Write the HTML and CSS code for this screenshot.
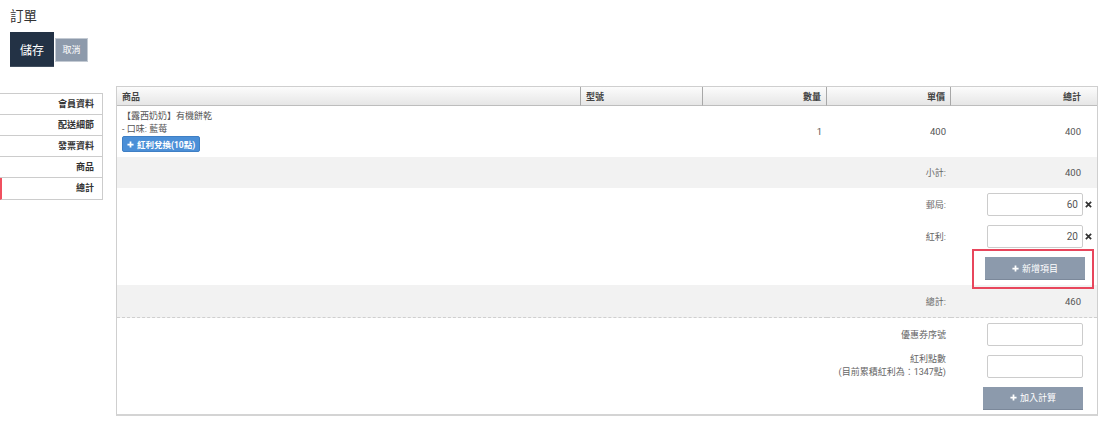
FILE: index.html
```html
<!DOCTYPE html>
<html lang="zh-Hant">
<head>
<meta charset="utf-8">
<title>訂單</title>
<link rel="stylesheet" href="styles.css">
</head>
<body>
<header class="page-head">
  <h1 class="title">訂單</h1>
  <div class="actions">
    <button class="btn btn-save">儲存</button>
    <button class="btn btn-cancel">取消</button>
  </div>
</header>
<div class="layout">
  <nav class="side-nav">
    <div class="side-item">會員資料</div>
    <div class="side-item">配送細節</div>
    <div class="side-item">發票資料</div>
    <div class="side-item">商品</div>
    <div class="side-item active">總計</div>
  </nav>
  <div class="panel">
    <table class="order-table">
      <thead>
        <tr>
          <th class="c-name">商品</th>
          <th class="c-model">型號</th>
          <th class="c-qty num">數量</th>
          <th class="c-price num">單價</th>
          <th class="c-total num last">總計</th>
        </tr>
      </thead>
      <tbody>
        <tr class="row-product">
          <td class="product">
            <div class="p-name">【露西奶奶】有機餅乾</div>
            <div class="p-opt">- 口味: 藍莓</div>
            <button class="btn btn-bonus"><svg class="plus" viewBox="0 0 8 8" width="7" height="7"><path d="M4 0.5V7.5M0.5 4H7.5" stroke="currentColor" stroke-width="2"/></svg><span>紅利兌換(10點)</span></button>
          </td>
          <td></td>
          <td class="num">1</td>
          <td class="num">400</td>
          <td class="num last">400</td>
        </tr>
        <tr class="row-sum">
          <td colspan="3"></td>
          <td class="label">小計:</td>
          <td class="num last">400</td>
        </tr>
        <tr class="row-fee first">
          <td colspan="3"></td>
          <td class="label">郵局:</td>
          <td class="field-cell">
            <div class="field">
              <input class="input" type="text" value="60">
              <span class="remove"><svg viewBox="0 0 8 8" width="7" height="7"><path d="M1 1L7 7M7 1L1 7" stroke="#333" stroke-width="2"/></svg></span>
            </div>
          </td>
        </tr>
        <tr class="row-fee">
          <td colspan="3"></td>
          <td class="label">紅利:</td>
          <td class="field-cell">
            <div class="field">
              <input class="input" type="text" value="20">
              <span class="remove"><svg viewBox="0 0 8 8" width="7" height="7"><path d="M1 1L7 7M7 1L1 7" stroke="#333" stroke-width="2"/></svg></span>
            </div>
          </td>
        </tr>
        <tr class="row-add">
          <td colspan="4"></td>
          <td class="field-cell">
            <div class="field">
              <span class="mark-wrap">
                <button class="btn btn-gray btn-add"><svg class="plus" viewBox="0 0 8 8" width="7" height="7"><path d="M4 0.5V7.5M0.5 4H7.5" stroke="currentColor" stroke-width="2"/></svg>新增項目</button>
                <span class="mark"></span>
              </span>
            </div>
          </td>
        </tr>
        <tr class="row-sum row-grand">
          <td colspan="3"></td>
          <td class="label">總計:</td>
          <td class="num last">460</td>
        </tr>
        <tr class="row-coupon">
          <td colspan="3"></td>
          <td class="label">優惠券序號</td>
          <td class="field-cell">
            <div class="field plain">
              <input class="input" type="text" value="">
            </div>
          </td>
        </tr>
        <tr class="row-coupon">
          <td colspan="3"></td>
          <td class="label two-line">紅利點數<br>(目前累積紅利為：1347點)</td>
          <td class="field-cell">
            <div class="field plain">
              <input class="input" type="text" value="">
            </div>
          </td>
        </tr>
        <tr class="row-calc">
          <td colspan="4"></td>
          <td class="field-cell">
            <div class="field plain">
              <button class="btn btn-gray btn-calc"><svg class="plus" viewBox="0 0 8 8" width="7" height="7"><path d="M4 0.5V7.5M0.5 4H7.5" stroke="currentColor" stroke-width="2"/></svg>加入計算</button>
            </div>
          </td>
        </tr>
      </tbody>
    </table>
  </div>
</div>
</body>
</html>
```

FILE: styles.css
```css
* { box-sizing: border-box; }
html, body { margin: 0; padding: 0; background: #fff; }
body {
  font-family: Roboto, "Noto Sans CJK TC", "Noto Sans", sans-serif;
  color: #555;
  font-size: 9px;
}
.page-head { padding: 5px 10px 0; }
.title {
  margin: 0;
  font-size: 13.5px;
  font-weight: normal;
  line-height: 22px;
  color: #333;
}
.actions { display: flex; align-items: center; margin-top: 5px; }
.btn { font-family: inherit; padding: 0; cursor: pointer; }
.btn-save {
  width: 44px; height: 35px;
  background: #233245; color: #fff;
  font-size: 12px;
  border: 0; border-bottom: 1px solid #56627299;
}
.btn-cancel {
  width: 33px; height: 24px; margin-left: 1px;
  background: #8d9aab; color: #fff;
  font-size: 9px;
  border: 1px solid #c3cad3;
}
.layout { display: flex; align-items: flex-start; margin-top: 19px; }
.side-nav {
  flex: none; width: 103px; margin-top: 7px;
  border-top: 1px solid #ccc; border-right: 1px solid #ccc;
}
.side-item {
  height: 21px; line-height: 20px;
  border-bottom: 1px solid #ccc;
  text-align: right; padding-right: 8px;
  font-weight: bold; color: #333; font-size: 9px;
}
.side-item.active { height: 22px; line-height: 21px; border-left: 2px solid #f0505f; }
.panel {
  flex: none; margin-left: 13px; width: 982px;
  border: 1px solid #cfcfcf; border-bottom: 2px solid #d4d4d4;
}
.order-table { width: 100%; border-collapse: separate; border-spacing: 0; table-layout: fixed; }
th {
  height: 19px; padding: 0 5px;
  font-weight: bold; font-size: 9px; color: #444; text-align: left;
  background: linear-gradient(#fcfcfc, #e6e6e6);
  border-bottom: 1px solid #bdbdbd; border-right: 1px solid #a8a8a8;
}
th:last-child { border-right: 0; }
th.c-name { width: 464px; }
th.c-model { width: 122px; }
th.c-qty { width: 124px; }
th.c-price { width: 124px; }
td { padding: 0 5px; vertical-align: middle; font-size: 9.5px; color: #555; }
.num { text-align: right; }
.last { padding-right: 16px; }
th.last { padding-right: 16px; }

.row-product td { height: 51px; }
td.product { padding: 4px 5px 5px; vertical-align: top; }
.p-name, .p-opt { font-size: 9px; line-height: 12.5px; color: #555; }
.btn-bonus {
  display: inline-flex; align-items: center; gap: 3px;
  height: 16px; margin-top: 1px;
  padding: 0 4px;
  white-space: nowrap;
  background: #4b8fd7; color: #fff;
  border: 1px solid #3f7fc4; border-radius: 2px;
  font-size: 8.5px; font-weight: bold;
}
.plus { flex: none; display: block; }

.row-sum td { height: 31px; background: #f2f2f2; }
.row-grand td { height: 33px; border-bottom: 1px dashed #cfcfcf; }
.label { text-align: right; color: #666; font-size: 9px; }
.two-line { line-height: 13px; }

.row-fee td { height: 32px; }
.row-add td { height: 33px; }
.row-coupon td { height: 32px; }
.row-calc td { height: 32px; }

.field-cell { padding: 0; }
.field { display: flex; justify-content: flex-end; align-items: center; }
.field.plain { padding-right: 14px; }
.input {
  width: 96px; height: 23px;
  border: 1px solid #ccc; border-radius: 2px;
  padding: 0 4px; text-align: right;
  font-family: inherit; font-size: 10px; color: #555;
  background: #fff;
}
.remove { width: 14px; display: flex; justify-content: center; align-items: center; padding-right: 3px; }
.remove svg { display: block; }

.btn-gray {
  display: inline-flex; align-items: center; justify-content: center; gap: 3px;
  width: 100px; height: 23px;
  white-space: nowrap;
  background: #8c9aac; color: #fff;
  border: 0; border-bottom: 1px solid #7b889a;
  font-size: 9px;
}
.mark-wrap { position: relative; display: inline-block; margin-right: 12px; }
.mark-wrap .btn-add { display: flex; }
.mark {
  position: absolute; top: -8px; left: -13px; right: -9px; bottom: -9px;
  border: 2px solid #e8465c;
  pointer-events: none;
}
```
